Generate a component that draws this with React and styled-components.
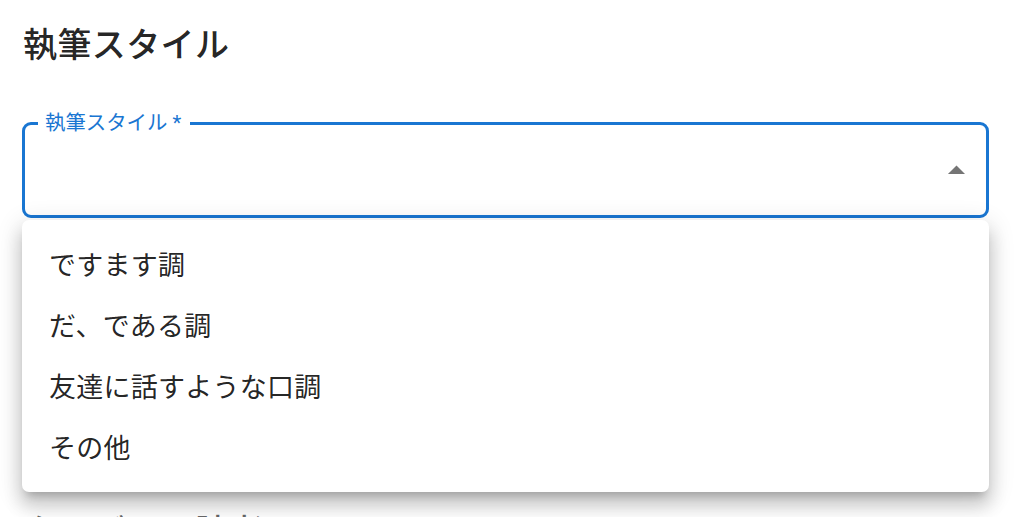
import React from "react";
import styled, { createGlobalStyle } from "styled-components";

const GlobalStyle = createGlobalStyle`
  html, body {
    margin: 0;
    padding: 0;
    background: #fff;
    overflow: hidden;
  }
  body {
    font-family: Roboto, "Noto Sans CJK JP", sans-serif;
    color: rgba(0, 0, 0, 0.87);
  }
`;

const Page = styled.div`
  display: flex;
  flex-direction: column;
  padding: 18px 35px 0 22px;
  height: 517px;
  box-sizing: border-box;
`;

const SectionTitle = styled.h6`
  margin: 0 0 0 1px;
  font-family: Roboto, "Noto Sans CJK JP", sans-serif;
  font-size: 34px;
  font-weight: 500;
  line-height: 54px;
  letter-spacing: 0.4px;
  color: rgba(0, 0, 0, 0.87);
`;

const FieldWrap = styled.div`
  position: relative;
  margin-top: 50px;
`;

const Field = styled.div`
  display: flex;
  align-items: center;
  justify-content: flex-end;
  height: 96px;
  box-sizing: border-box;
  border: 3px solid #1976d2;
  border-radius: 9px;
  padding-right: 9px;
`;

const FloatLabel = styled.label`
  position: absolute;
  top: -11px;
  left: 16px;
  padding: 0 9px 0 7px;
  background: #fff;
  font-family: Roboto, "Noto Sans CJK JP", sans-serif;
  font-size: 20.4px;
  line-height: 24px;
  color: #1976d2;
`;

const ArrowIcon = styled.svg`
  width: 41px;
  height: 41px;
  fill: rgba(0, 0, 0, 0.54);
`;

const Menu = styled.ul`
  position: absolute;
  top: calc(100% + 2px);
  left: 0;
  right: 0;
  margin: 0;
  padding: 16px 0 12px;
  list-style: none;
  background: #fff;
  border-radius: 7px;
  box-shadow: 0px 8px 9px -5px rgba(0, 0, 0, 0.2),
    0px 14px 17px 2px rgba(0, 0, 0, 0.14),
    0px 5px 24px 3px rgba(0, 0, 0, 0.12);
  z-index: 2;
`;

const MenuItem = styled.li`
  display: flex;
  align-items: center;
  min-height: 61px;
  box-sizing: border-box;
  padding: 10px 27px;
  font-family: Roboto, "Noto Sans CJK JP", sans-serif;
  font-size: 27px;
  line-height: 1.5;
  letter-spacing: 0.25px;
  color: rgba(0, 0, 0, 0.87);
`;

const NextTitle = styled(SectionTitle)`
  margin-top: 287px;
  color: rgba(0, 0, 0, 0.6);
`;

const options = ["ですます調", "だ、である調", "友達に話すような口調", "その他"];

const App = () => (
  <>
    <GlobalStyle />
    <Page>
      <SectionTitle>執筆スタイル</SectionTitle>
      <FieldWrap>
        <FloatLabel>執筆スタイル *</FloatLabel>
        <Field>
          <ArrowIcon viewBox="0 0 24 24">
            <path d="M7 14l5-5 5 5z" />
          </ArrowIcon>
        </Field>
        <Menu>
          {options.map((o) => (
            <MenuItem key={o}>{o}</MenuItem>
          ))}
        </Menu>
      </FieldWrap>
      <NextTitle>ターゲット読者</NextTitle>
    </Page>
  </>
);

export default App;
